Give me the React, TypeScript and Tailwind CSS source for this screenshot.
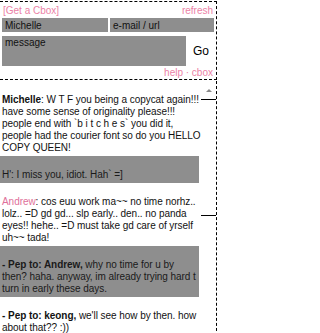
import React from "react";

const pink = "text-[#ec82a6]";

function Header() {
  return (
    <div className="mt-[1px] w-[217px] border-t border-r border-b border-dashed border-black">
      <div className={`flex h-[16px] items-center justify-between pl-[3px] pr-[3px] text-[10px] ${pink}`}>
        <span>[Get a Cbox]</span>
        <span>refresh</span>
      </div>
      <div className="flex h-[14px] gap-[2px] pl-[2px] text-[10px] text-[#111]">
        <div className="flex w-[106px] items-center bg-[#8e8e8e] pl-[3px]">Michelle</div>
        <div className="flex w-[104px] items-center bg-[#8e8e8e] pl-[3px]">e-mail / url</div>
      </div>
      <div className="mt-[4px] flex h-[30px] pl-[2px]">
        <div className="w-[184px] bg-[#8e8e8e] pl-[3px] pt-[1px] text-[10px] leading-[12px] text-[#111]">
          message
        </div>
        <div className="flex flex-1 items-center justify-center text-[12px] text-black">Go</div>
      </div>
      <div className={`flex h-[13px] items-center justify-end pr-[3px] text-[10px] ${pink}`}>
        help · cbox
      </div>
    </div>
  );
}

interface MsgProps {
  gray?: boolean;
  children: React.ReactNode;
}

function Msg({ gray, children }: MsgProps) {
  return (
    <div
      className={`whitespace-nowrap pl-[2px] pt-[13px] pb-[2px] text-[10px] leading-[12px] tracking-[-0.05px] ${
        gray ? "bg-[#8e8e8e] text-[#1a1a1a]" : "bg-white text-[#111]"
      }`}
    >
      {children}
    </div>
  );
}

function Messages() {
  return (
    <div className="mt-[1px] flex w-[217px] border-r border-dashed border-black">
      <div className="w-[199px]">
        <Msg>
          <b>Michelle</b>: W T F you being a copycat again!!!
          <br />
          have some sense of originality please!!!
          <br />
          people end with `b i t c h e s` you did it,
          <br />
          people had the courier font so do you HELLO
          <br />
          COPY QUEEN!
        </Msg>
        <Msg gray>H': I miss you, idiot. Hah` =]</Msg>
        <Msg>
          <span className="text-[#e0709a]">Andrew</span>: cos euu work ma~~ no time norhz..
          <br />
          lolz.. =D gd gd... slp early.. den.. no panda
          <br />
          eyes!! hehe.. =D must take gd care of yrself
          <br />
          uh~~ tada!
        </Msg>
        <Msg gray>
          <b>- Pep to: Andrew,</b> why no time for u by
          <br />
          then? haha. anyway, im already trying hard t
          <br />
          turn in early these days.
        </Msg>
        <Msg>
          <b>- Pep to: keong,</b> we'll see how by then. how
          <br />
          about that?? :))
        </Msg>
      </div>
      <div className="w-[17px] pt-[8px]">
        <div className="ml-[7px] h-0 w-0 border-x-[3px] border-b-[3px] border-x-transparent border-b-[#8a8a8a]" />
        <div className="ml-[2px] mt-[7px] h-[117px] border-y border-black" />
      </div>
    </div>
  );
}

export default function App() {
  return (
    <div className="h-[333px] w-[219px] overflow-hidden bg-white font-['Liberation_Sans',Arial,sans-serif]">
      <Header />
      <Messages />
    </div>
  );
}
